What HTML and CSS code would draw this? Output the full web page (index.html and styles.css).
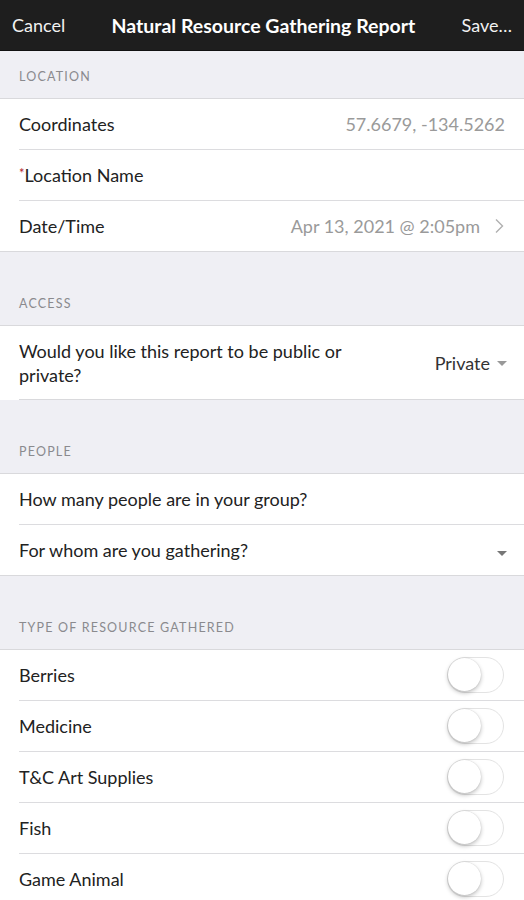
FILE: index.html
```html
<!DOCTYPE html>
<html>
<head>
  <title>Natural Resource Gathering Report</title>
  <meta charset="UTF-8">
  <link rel="stylesheet" href="styles.css">
</head>
<body>
  <header class="topbar">
    <span class="nav-btn">Cancel</span>
    <h1 class="title">Natural Resource Gathering Report</h1>
    <span class="nav-btn">Save…</span>
  </header>

  <main class="form">
    <!-- 위치 -->
    <div class="section-title first">LOCATION</div>
    <ul class="group">
      <li class="row">
        <span class="label">Coordinates</span>
        <span class="value">57.6679, -134.5262</span>
      </li>
      <li class="row">
        <span class="label"><span class="req">*</span>Location Name</span>
      </li>
      <li class="row">
        <span class="label">Date/Time</span>
        <span class="value">Apr 13, 2021 @ 2:05pm</span>
        <svg class="chevron" width="10" height="16" viewBox="0 0 10 16"><path d="M2 1.5l6.5 6.5-6.5 6.5" fill="none" stroke="#b0b0b0" stroke-width="1.4"/></svg>
      </li>
    </ul>

    <!-- 공개 설정 -->
    <div class="section-title">ACCESS</div>
    <ul class="group inset-end">
      <li class="row tall">
        <span class="label wrap">Would you like this report to be public or private?</span>
        <span class="select">Private <i class="caret"></i></span>
      </li>
    </ul>

    <!-- 인원 -->
    <div class="section-title">PEOPLE</div>
    <ul class="group">
      <li class="row">
        <span class="label">How many people are in your group?</span>
      </li>
      <li class="row">
        <span class="label">For whom are you gathering?</span>
        <span class="select"><i class="caret dark"></i></span>
      </li>
    </ul>

    <!-- 자원 종류 -->
    <div class="section-title">TYPE OF RESOURCE GATHERED</div>
    <ul class="group">
      <li class="row"><span class="label">Berries</span><span class="toggle"></span></li>
      <li class="row"><span class="label">Medicine</span><span class="toggle"></span></li>
      <li class="row"><span class="label">T&amp;C Art Supplies</span><span class="toggle"></span></li>
      <li class="row"><span class="label">Fish</span><span class="toggle"></span></li>
      <li class="row"><span class="label">Game Animal</span><span class="toggle"></span></li>
    </ul>
  </main>
</body>
</html>
```

FILE: styles.css
```css
body {
  margin: 0;
  background-color: #efeff4;
  font-family: 'Lato', 'Open Sans', sans-serif;
  color: #222;
  overflow: hidden;
}
.topbar {
  height: 50px;
  background-color: #1e1e1e;
  border-bottom: 1px solid #111;
  display: flex;
  align-items: center;
  justify-content: space-between;
  padding: 0 12px;
  color: #f2f2f2;
}
.nav-btn {
  font-size: 18px;
}
.title {
  margin: 0;
  font-size: 19.5px;
  font-weight: bold;
  color: #fff;
}
.section-title {
  height: 73px;
  box-sizing: border-box;
  padding: 0 19px 14px;
  display: flex;
  align-items: flex-end;
  font-size: 12.5px;
  letter-spacing: 1.2px;
  color: #8a8a8e;
}
.section-title.first {
  height: 47px;
}
.group {
  list-style: none;
  margin: 0;
  padding: 0;
  background-color: #fff;
  border-top: 1px solid #d9d9dc;
  border-bottom: 1px solid #d9d9dc;
}
.group.inset-end {
  border-bottom: none;
}
.group.inset-end::after {
  content: '';
  display: block;
  margin-left: 19px;
  border-bottom: 1px solid #d9d9dc;
}
.row {
  height: 50px;
  margin-left: 19px;
  padding-right: 19px;
  display: flex;
  align-items: center;
  border-bottom: 1px solid #dcdcdf;
  font-size: 18px;
}
.row:last-child {
  border-bottom: none;
}
.row.tall {
  height: 73px;
}
.label {
  flex: 1;
}
.label.wrap {
  flex: 0 1 345px;
  line-height: 24px;
}
.req {
  color: #b3262e;
  font-size: 13px;
  vertical-align: 4px;
}
.value {
  color: #9a9a9a;
}
.chevron {
  margin-left: 14px;
  margin-right: 1px;
}
.select {
  margin-left: auto;
  display: flex;
  align-items: center;
  gap: 7px;
  color: #333;
}
.caret {
  width: 0;
  height: 0;
  border-left: 5px solid transparent;
  border-right: 5px solid transparent;
  border-top: 5px solid #999;
  margin-top: 2px;
  margin-right: -2px;
}
.caret.dark {
  border-top-color: #777;
  margin-top: 6px;
}
.toggle {
  position: relative;
  width: 55px;
  height: 34px;
  border: 1px solid #e3e3e3;
  border-radius: 18px;
  background-color: #fff;
  margin-right: 1px;
}
.toggle::after {
  content: '';
  position: absolute;
  left: 0;
  top: 0;
  width: 33px;
  height: 33px;
  border-radius: 50%;
  background-color: #fff;
  box-shadow: 0 2px 4px rgba(0,0,0,0.25), 0 0 1px rgba(0,0,0,0.2);
}
```
